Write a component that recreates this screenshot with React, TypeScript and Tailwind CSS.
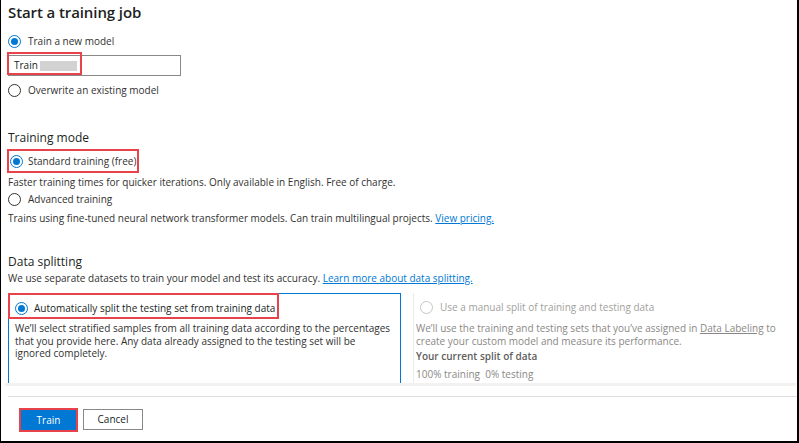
import React from "react";

const font = { fontFamily: '"Open Sans", "Noto Sans", sans-serif' };

function Radio({ checked, disabled }: { checked?: boolean; disabled?: boolean }) {
  if (checked) {
    return (
      <span className="w-[13px] h-[13px] rounded-full border border-[#0078d4] flex items-center justify-center shrink-0">
        <span className="w-[7px] h-[7px] rounded-full bg-[#0078d4]" />
      </span>
    );
  }
  return (
    <span
      className={
        "w-[13px] h-[13px] rounded-full border shrink-0 " +
        (disabled ? "border-[#c8c6c4]" : "border-[#323130]")
      }
    />
  );
}

export default function App() {
  return (
    <div
      className="w-[799px] h-[443px] bg-white border-l border-r-2 border-b-2 border-black overflow-hidden text-[#323130]"
      style={font}
    >
      <div className="pl-[7px] flex flex-col">
        <div className="h-[24px] flex items-center text-[15px] font-semibold text-[#201f1e] tracking-[-0.1px]">
          Start a training job
        </div>
        <div className="mt-[7px] h-[20px] flex items-center gap-[7px] text-[10px]">
          <Radio checked />
          <span>Train a new model</span>
        </div>
        <div className="mt-[4px] h-[21px] w-[173px] border border-[#8a8886] relative flex items-center">
          <div className="absolute left-[-2px] top-[-4px] w-[75px] h-[23px] border-2 border-[#e8434b]" />
          <span className="text-[10px] pl-[5px] text-[#201f1e]">Train</span>
          <span className="ml-[2px] w-[37px] h-[10px] bg-[#d2d2d2]" />
        </div>
        <div className="mt-[4px] h-[20px] flex items-center gap-[7px] text-[10px]">
          <Radio />
          <span>Overwrite an existing model</span>
        </div>
        <div className="mt-[28px] h-[20px] flex items-center text-[12px] text-[#201f1e]">Training mode</div>
        <div className="mt-[1px] h-[24px] flex items-center ml-[-1px]">
          <div className="h-[24px] w-[132px] flex items-center gap-[5px] border-2 border-[#e8434b] pl-[1px] text-[10px]">
            <Radio checked />
            <span>Standard training (free)</span>
          </div>
        </div>
        <div className="mt-[1px] h-[16px] flex items-center text-[10px]">
          Faster training times for quicker iterations. Only available in English. Free of charge.
        </div>
        <div className="mt-[1px] h-[16px] flex items-center gap-[7px] text-[10px]">
          <Radio />
          <span>Advanced training</span>
        </div>
        <div className="mt-[3px] h-[16px] flex items-center text-[10px]">
          <span>
            Trains using fine-tuned neural network transformer models. Can train multilingual projects.{" "}
            <span className="text-[#0078d4] underline">View pricing.</span>
          </span>
        </div>
        <div className="mt-[26px] h-[20px] flex items-center text-[12px] text-[#201f1e]">Data splitting</div>
        <div className="h-[12px] flex items-center text-[10px]">
          <span>
            We use separate datasets to train your model and test its accuracy.{" "}
            <span className="text-[#0078d4] underline">Learn more about data splitting.</span>
          </span>
        </div>
        <div className="mt-[9px] h-[90px] flex">
          <div className="w-[393px] border-t border-l border-r border-[#0078d4] flex flex-col relative">
            <div className="absolute left-[-1px] top-[-1px] w-[271px] h-[26px] border-2 border-[#e8434b]" />
            <div className="h-[28px] flex items-center gap-[6px] pl-[6px] text-[10px] text-[#201f1e]">
              <Radio checked />
              <span>Automatically split the testing set from training data</span>
            </div>
            <div className="pl-[6px] pr-[8px] text-[10px] leading-[12.5px]">
              We’ll select stratified samples from all training data according to the percentages that you provide here. Any data already assigned to the testing set will be ignored completely.
            </div>
          </div>
          <div className="ml-[12px] flex-1 border-l border-[#edebe9] flex flex-col">
            <div className="h-[30px] flex items-center gap-[7px] pl-[6px] text-[10px] text-[#a19f9d]">
              <Radio disabled />
              <span>Use a manual split of training and testing data</span>
            </div>
            <div className="pl-[2px] text-[10px] leading-[12.5px] text-[#8a8886] flex flex-col">
              <div className="whitespace-nowrap">
                <span>We’ll use the training and testing sets that you’ve assigned in </span>
                <span className="underline">Data Labeling</span>
                <span> to</span>
              </div>
              <div>create your custom model and measure its performance.</div>
            </div>
            <div className="pl-[2px] mt-[1px] h-[18px] flex items-center text-[10px] font-semibold text-[#605e5c]">
              Your current split of data
            </div>
            <div className="pl-[2px] h-[18px] flex items-center text-[10px] text-[#8a8886]">
              100% training&nbsp; 0% testing
            </div>
          </div>
        </div>
      </div>
      <div className="h-[3px] ml-[4px] mr-[1px] bg-[#f3f2f1]" />
      <div className="mt-[10px] h-[1px] ml-[7px] bg-[#e1dfdd]" />
      <div className="flex gap-[5px] pl-[18px] pt-[11px] items-start">
        <div className="w-[59px] h-[24px] border-2 border-[#e8434b] bg-[#0078d4] text-white text-[10px] flex items-center justify-center">
          Train
        </div>
        <div className="w-[60px] h-[21px] mt-[1px] border border-[#8a8886] text-[#201f1e] text-[10px] flex items-center justify-center">
          Cancel
        </div>
      </div>
    </div>
  );
}
